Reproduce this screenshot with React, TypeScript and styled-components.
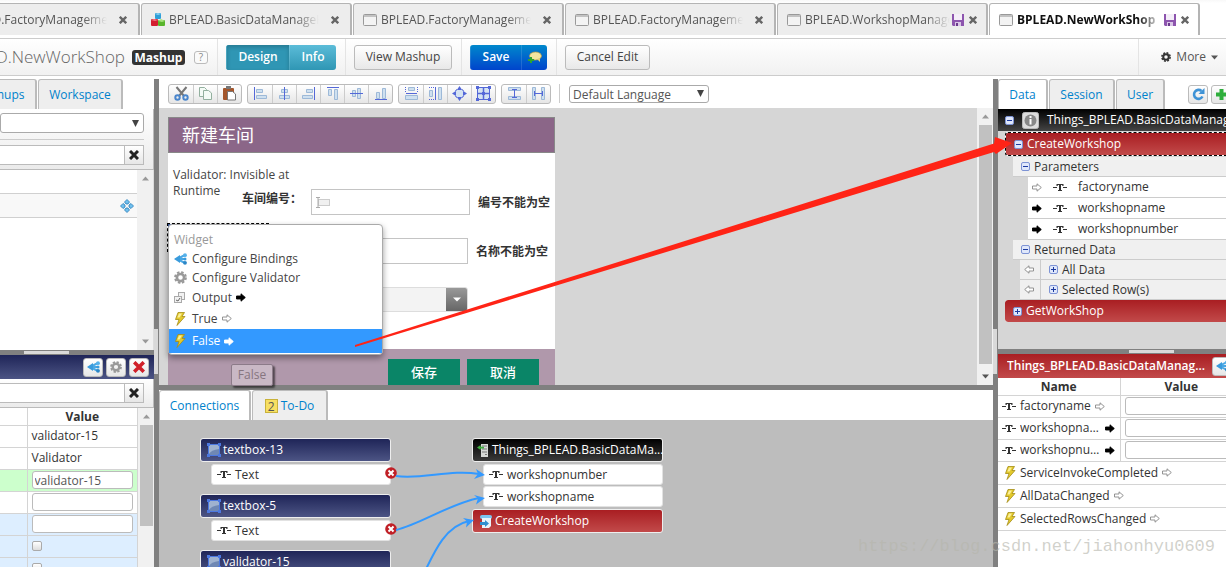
import React from 'react';
import styled, { createGlobalStyle, css } from 'styled-components';

const FONT = '"Open Sans", "Noto Sans", "Noto Sans CJK SC", sans-serif';

const Global = createGlobalStyle`
  *, *::before, *::after { box-sizing: border-box; }
  body { margin: 0; background: #fff; color: #333; font: 12px/16px ${FONT}; overflow: hidden; }
  button, input, select { font: inherit; color: inherit; margin: 0; }
  button { cursor: pointer; }
  h1, h2 { margin: 0; font: inherit; }
  svg { display: block; flex: none; }
`;

/* ---------- shell ---------- */

const Shell = styled.div`
  position: relative;
  display: flex;
  flex-direction: column;
  height: 100vh;
  overflow: hidden;
`;

const TabStrip = styled.nav`
  display: flex;
  gap: 1px;
  height: 35px;
  padding-top: 3px;
  margin-left: -71px;
  background: linear-gradient(#f8f8f8, #fff 3px);
`;

const DocTab = styled.div<{ $active?: boolean }>`
  display: flex;
  align-items: center;
  flex: none;
  width: 211px;
  height: 32px;
  padding: 0 8px 0 9px;
  border: 1px solid #b4b4b4;
  border-width: 1px 2px 0 1px;
  border-radius: 3px 3px 0 0;
  background: ${(p) => (p.$active ? '#fff' : '#ededed')};
`;

const DocName = styled.a<{ $active?: boolean }>`
  flex: 1;
  min-width: 0;
  margin-left: 4px;
  overflow: hidden;
  white-space: nowrap;
  text-decoration: none;
  color: ${(p) => (p.$active ? '#111' : '#555')};
  font-weight: ${(p) => (p.$active ? 700 : 400)};
  mask-image: linear-gradient(90deg, #000 calc(100% - 24px), transparent);
`;

const IconButton = styled.button`
  display: flex;
  align-items: center;
  justify-content: center;
  flex: none;
  padding: 0;
  border: 0;
  background: none;
`;

const DocActions = styled.div<{ $wide?: boolean }>`
  display: flex;
  align-items: center;
  justify-content: flex-end;
  gap: 5px;
  width: ${(p) => (p.$wide ? 27 : 20)}px;
  margin-right: ${(p) => (p.$wide ? 1 : 3)}px;
`;

const Header = styled.header`
  display: flex;
  align-items: center;
  flex: none;
  height: 38px;
  margin: 3px 0;
  border: 1px solid #ccc;
  border-width: 1px 0;
  background: linear-gradient(#fff, #f1f1f1);
`;

const Title = styled.h1`
  display: flex;
  justify-content: flex-end;
  width: 125px;
  overflow: hidden;
  font-size: 17px;
  line-height: 24px;
  font-weight: 300;
  color: #666;
  white-space: nowrap;
`;

const Badge = styled.span`
  width: 53px;
  height: 15px;
  margin-left: 7px;
  border-radius: 3px;
  background: #333;
  color: #fff;
  font-weight: 700;
  line-height: 15px;
  text-align: center;
`;

const Help = styled.button`
  width: 14px;
  height: 13px;
  margin: 0 9px;
  padding: 0;
  border: 1px solid #bbb;
  border-radius: 3px;
  background: #fafafa;
  color: #888;
  font-size: 10px;
  line-height: 10px;
`;

const HeaderGroup = styled.div`
  display: flex;
  align-items: center;
  height: 36px;
  padding: 0 9px 0 8px;
  border-left: 1px solid #e4e4e4;
`;

const PlainButton = styled.button<{ $w: number }>`
  width: ${(p) => p.$w}px;
  height: 25px;
  padding: 0;
  border: 1px solid #bbb;
  border-radius: 3px;
  background: linear-gradient(#fff, #e8e8e8);
  color: #444;
`;

const Split = styled.div<{ $tone: 'teal' | 'blue' }>`
  display: flex;
  height: 25px;
  overflow: hidden;
  border-radius: 3px;
  background: ${(p) =>
    p.$tone === 'teal' ? 'linear-gradient(#5bbcd8, #2f96b4)' : 'linear-gradient(#0088cc, #0044cc)'};
`;

const SplitPart = styled.button<{ $w: number; $pressed?: boolean }>`
  display: flex;
  align-items: center;
  justify-content: center;
  width: ${(p) => p.$w}px;
  padding: 0;
  border: 0;
  border-left: 1px solid #ffffff22;
  background: ${(p) => (p.$pressed ? '#2f96b4' : 'none')};
  box-shadow: ${(p) => (p.$pressed ? 'inset 0 2px 4px #0003' : 'none')};
  color: #fff;
  font-weight: 600;
`;

const More = styled.button`
  display: flex;
  align-items: center;
  gap: 5px;
  height: 36px;
  margin-left: auto;
  padding: 0 8px 0 22px;
  border: 0;
  border-left: 1px solid #e4e4e4;
  background: none;
  color: #555;
`;

const Body = styled.main`
  display: grid;
  grid-template-columns: 154px 5px minmax(0, 1fr) 5px 228px;
  flex: 1;
  min-height: 0;
`;

const Column = styled.section`
  display: flex;
  flex-direction: column;
  min-width: 0;
  min-height: 0;
  overflow: hidden;
`;

const VSplit = styled.div`
  display: flex;
  flex-direction: column;
  padding-top: 250px;
  background: #808080;
  &::before { content: ''; height: 45px; margin-right: 1px; background: #d9d9d9; }
`;

const HSplit = styled.div<{ $start?: number }>`
  flex: none;
  height: 5px;
  padding: 1px 0 0 ${(p) => p.$start ?? 0}px;
  background: #808080;
  &::before {
    content: '';
    display: ${(p) => (p.$start ? 'block' : 'none')};
    width: 45px;
    height: 3px;
    background: #d9d9d9;
  }
`;

/* ---------- shared parts ---------- */

const Tabs = styled.nav`
  display: flex;
  flex: none;
  gap: 1px;
  height: 30px;
  background: #fff;
`;

const Tab = styled.a<{ $active?: boolean; $w: number }>`
  display: flex;
  align-items: center;
  justify-content: center;
  gap: 3px;
  flex: none;
  width: ${(p) => p.$w}px;
  border: 1px solid #bbb;
  border-width: 1px 2px 0 1px;
  border-radius: 3px 3px 0 0;
  background: ${(p) => (p.$active ? '#fff' : '#eee')};
  color: #0082cc;
  text-decoration: none;
`;

const LeftTabs = styled(Tabs)`
  margin-left: -38px;
`;

const Controls = styled.div<{ $h: number }>`
  display: flex;
  flex-direction: column;
  justify-content: space-between;
  flex: none;
  height: ${(p) => p.$h}px;
  padding: 4px 9px 4px 0;
  border: 1px solid #bbb;
  border-width: 0 1px 1px 0;
  background: linear-gradient(#fff, #ebebeb);
`;

const Divider = styled.hr`
  width: 100%;
  margin: 0;
  border: 0;
  border-top: 1px solid #ccc;
`;

const Picker = styled.div<{ $w?: string }>`
  display: grid;
  align-items: center;
  width: ${(p) => p.$w ?? '100%'};
  & > * { grid-area: 1 / 1; }
  & > svg { justify-self: end; margin-right: 5px; pointer-events: none; }
`;

const Select = styled.select<{ $h: number }>`
  width: 100%;
  height: ${(p) => p.$h}px;
  padding: 1px 3px 0;
  border: 1px solid #aaa;
  border-radius: 3px;
  background: #fff;
  color: #555;
  appearance: none;
`;

const SearchRow = styled.div`
  display: flex;
  height: 20px;
`;

const SearchBox = styled.input`
  flex: 1;
  min-width: 0;
  border: 1px solid #bbb;
  border-width: 1px 0 1px 0;
  background: #fff;
`;

const ClearButton = styled(IconButton)`
  width: 20px;
  border: 1px solid #bbb;
  background: linear-gradient(#fff, #e6e6e6);
`;

const ToolChip = styled(IconButton)`
  width: 20px;
  height: 19px;
  border: 1px solid #bbb;
  border-radius: 3px;
  background: linear-gradient(#fff, #e6e6e6);
`;

const Bar = styled.div`
  display: flex;
  flex-direction: column;
  align-items: center;
  flex: none;
  width: 16px;
  background: #f1f1f1;
  & > svg { margin: 6px 0; }
`;

const Thumb = styled.div<{ $h?: number }>`
  width: 13px;
  flex: ${(p) => (p.$h ? `0 0 ${p.$h}px` : '1')};
  margin-bottom: ${(p) => (p.$h ? 'auto' : '4px')};
  background: #c1c1c1;
`;

const Spacer = styled.div`
  flex: 1;
`;

/* ---------- left column ---------- */

const ListPane = styled.div<{ $h: number }>`
  display: flex;
  flex: none;
  height: ${(p) => p.$h}px;
  border-right: 1px solid #ddd;
`;

const WidgetList = styled.div`
  flex: 1;
  padding-top: 23px;
`;

const WidgetRow = styled.div`
  display: flex;
  align-items: center;
  justify-content: flex-end;
  height: 25px;
  padding-right: 3px;
  border: 1px solid #d0d0d0;
  border-width: 1px 0;
  background: #f8f8f8;
`;

const PaneHead = styled.div<{ $tone: 'navy' | 'red' }>`
  display: flex;
  align-items: center;
  flex: none;
  gap: 3px;
  height: 24px;
  padding: 0 5px 0 9px;
  overflow: hidden;
  color: #fff;
  font-weight: 600;
  background: ${(p) =>
    p.$tone === 'navy' ? 'linear-gradient(#1f2558, #4c5484)' : 'linear-gradient(#a91e22, #c24a4a)'};
`;

const PropPane = styled.div`
  display: flex;
  flex: 1;
  min-height: 0;
  overflow: hidden;
`;

const Table = styled.table`
  flex: 1;
  width: 100%;
  height: max-content;
  border-collapse: collapse;
  table-layout: fixed;
  th { height: 17px; padding: 0; line-height: 15px; border: 1px solid #d4d4d4; border-width: 0 1px 1px 0; }
  td { height: 22px; padding: 0 4px; border: 1px solid #d4d4d4; border-width: 0 1px 1px 0; overflow: hidden; white-space: nowrap; }
`;

/* The service table runs on past the window's right edge. */
const WideTable = styled(Table)`
  flex: none;
  width: calc(100% + 17px);
`;

const PropRow = styled.tr<{ $tone?: string }>`
  background: ${(p) => p.$tone ?? '#fff'};
`;

const Field = styled.input`
  display: block;
  width: 101px;
  height: 18px;
  padding: 0 2px;
  border: 1px solid #bbb;
  border-radius: 3px;
  background: #fff;
  color: #555;
`;

const WideField = styled(Field)`
  width: 110px;
`;

const Check = styled.input`
  display: block;
  width: 10px;
  height: 10px;
  appearance: none;
  border: 1px solid #aaa;
  border-radius: 2px;
  background: linear-gradient(#fff, #ddd);
`;

/* ---------- centre ---------- */

const Toolbar = styled.div`
  display: flex;
  align-items: center;
  flex: none;
  gap: 5px;
  height: 29px;
  padding-left: 9px;
  background: #fff;
`;

const ToolGroup = styled.div`
  display: flex;
  height: 20px;
  border: 1px solid #bbb;
  border-radius: 3px;
  background: linear-gradient(#fff, #e6e6e6);
`;

const Tool = styled(IconButton)`
  width: 24px;
  & + & { border-left: 1px solid #ccc; }
`;

const ToolDivider = styled.div`
  width: 1px;
  height: 19px;
  margin: 0 4px 0 3px;
  background: #ccc;
`;

const Stage = styled.div`
  position: relative;
  display: flex;
  flex: none;
  height: 277px;
  background: #d6d6d6;
`;

const StageArea = styled.div`
  flex: 1;
  min-width: 0;
  padding: 9px 0 0 9px;
`;

const Mashup = styled.div`
  display: flex;
  flex-direction: column;
  width: 387px;
  height: 268px;
  background: #fff;
`;

const MashupTitle = styled.h2`
  height: 36px;
  padding-left: 13px;
  border: 1px solid #888;
  background: #8b6688;
  color: #fff;
  font-size: 18px;
  line-height: 34px;
`;

const FormArea = styled.div`
  display: flex;
  flex-direction: column;
  gap: 23px;
  flex: 1;
  padding-top: 14px;
`;

const FormRow = styled.div<{ $pad: number }>`
  display: flex;
  align-items: flex-end;
  padding-left: ${(p) => p.$pad}px;
`;

const ValidatorNote = styled.p`
  width: 126px;
  margin: 0 -57px 16px 0;
  color: #444;
`;

const FieldLabel = styled.label`
  width: 69px;
  margin-bottom: 8px;
  font-weight: 700;
`;

const FieldHint = styled.span`
  margin: 0 0 4px 8px;
  font-weight: 700;
`;

const MashBox = styled.div<{ $w: number }>`
  display: grid;
  align-items: center;
  width: ${(p) => p.$w}px;
  height: 26px;
  & > * { grid-area: 1 / 1; }
  & > input { width: 100%; height: 100%; border: 1px solid #c4c4c4; background: #fff; }
  & > svg { margin-left: 4px; pointer-events: none; }
`;

const Combo = styled.div`
  display: flex;
  width: 157px;
  height: 25px;
  border: 1px solid #ddd;
  border-radius: 3px;
  overflow: hidden;
  background: #f3f3f3;
`;

const ComboButton = styled(IconButton)`
  width: 21px;
  margin-left: auto;
  background: linear-gradient(#999, #666);
`;

const MashupFooter = styled.div`
  display: flex;
  justify-content: flex-end;
  gap: 7px;
  height: 36px;
  padding: 10px 16px 0 0;
  background: #b098ab;
`;

const GreenButton = styled.button`
  width: 72px;
  padding: 0;
  border: 0;
  background: #0a8567;
  color: #fff;
  font-size: 13px;
  font-weight: 500;
`;

const Selection = styled.div`
  position: absolute;
  left: 8px;
  top: 115px;
  width: 102px;
  height: 29px;
  border: 1px dashed #000;
  background: linear-gradient(#3b5a9a, #3b5a9a) padding-box, linear-gradient(#fff, #fff) border-box;
`;

const Menu = styled.ul`
  position: absolute;
  left: 9px;
  top: 116px;
  width: 215px;
  margin: 0;
  padding: 5px 0 1px;
  border: 1px solid #aaa;
  border-radius: 4px;
  background: #fff;
  box-shadow: 0 3px 6px #0006;
  list-style: none;
`;

const MenuItem = styled.li<{ $h: number; $kind?: 'title' | 'selected' }>`
  & > button, & > span {
    display: flex;
    align-items: center;
    gap: 4px;
    width: 100%;
    height: ${(p) => p.$h}px;
    padding: 0 5px;
    border: 0;
    background: ${(p) => (p.$kind === 'selected' ? '#3399ff' : 'none')};
    color: ${(p) => (p.$kind === 'selected' ? '#fff' : p.$kind === 'title' ? '#999' : '#444')};
  }
`;

const MenuIcon = styled.span`
  display: flex;
  flex: none;
  width: 14px;
`;

const Tooltip = styled.div`
  position: absolute;
  z-index: 2;
  left: 72px;
  top: 256px;
  width: 42px;
  height: 22px;
  border: 1px solid #8c7b89;
  border-radius: 2px;
  background: #c9b8c5;
  box-shadow: 2px 2px 2px #0008;
  color: #86757f;
  line-height: 20px;
  text-align: center;
`;

const Graph = styled.div`
  position: relative;
  flex: 1;
  min-height: 0;
  overflow: hidden;
  background: #bdbdbd;
`;

const Wires = styled.svg`
  position: absolute;
  z-index: 1;
  left: 0;
  top: 0;
  pointer-events: none;
`;

const Node = styled.div<{ $x: number; $y: number }>`
  position: absolute;
  left: ${(p) => p.$x}px;
  top: ${(p) => p.$y}px;
  display: flex;
  flex-direction: column;
  gap: 1px;
  width: 191px;
`;

const NODE_BG = {
  navy: 'linear-gradient(#1f2558, #4c5484)',
  black: 'linear-gradient(#000, #3a3a3a)',
  red: 'linear-gradient(#a91e22, #c24a4a)',
};

const NodeHead = styled.div<{ $tone: keyof typeof NODE_BG }>`
  display: flex;
  align-items: center;
  gap: 2px;
  height: 24px;
  margin: 1px 0;
  padding: 0 0 0 ${(p) => (p.$tone === 'black' ? 4 : 6)}px;
  border: 1px solid #eee;
  border-radius: 3px;
  background: ${(p) => NODE_BG[p.$tone]};
  color: #fff;
  white-space: nowrap;
`;

const NodePort = styled.div`
  display: flex;
  align-items: center;
  gap: 4px;
  height: 21px;
  margin-left: 11px;
  padding-left: 5px;
  border: 1px solid #e2e2e2;
  border-radius: 3px;
  background: #fff;
`;

const Remove = styled(IconButton)`
  margin: 0 -7px 4px auto;
`;

const TodoCount = styled.span`
  width: 13px;
  height: 14px;
  border: 1px solid #c9b23a;
  background: #f7df62;
  color: #555;
  line-height: 13px;
  text-align: center;
`;

/* ---------- right column ---------- */

const TabTools = styled.div`
  display: flex;
  gap: 3px;
  align-items: center;
  margin-left: 22px;
`;

const Tree = styled.div`
  display: flex;
  flex-direction: column;
  flex: none;
  height: 240px;
  background: #d6d6d6;
`;

const TreeRow = styled.div<{
  $indent: number;
  $kind: 'root' | 'service' | 'group' | 'leaf' | 'result';
  $dashed?: boolean;
}>`
  display: flex;
  align-items: center;
  flex: none;
  gap: 4px;
  height: ${(p) => (p.$kind === 'leaf' ? 21 : 20)}px;
  margin-left: ${(p) => p.$indent}px;
  padding-left: ${(p) => (p.$kind === 'leaf' || p.$kind === 'result' ? 4 : 8)}px;
  border-bottom: 1px solid #ccc;
  overflow: hidden;
  white-space: nowrap;
  background: ${(p) => (p.$kind === 'leaf' ? '#fff' : '#f0f0f0')};
  ${(p) =>
    p.$kind === 'root' &&
    css`
      gap: 8px;
      height: 22px;
      margin-bottom: 1px;
      padding-left: 7px;
      border: 0;
      background: linear-gradient(#000, #444);
      color: #fff;
    `}
  ${(p) =>
    p.$kind === 'service' &&
    css`
      height: ${p.$dashed ? 24 : 22}px;
      margin-bottom: ${p.$dashed ? 1 : 0}px;
      border: ${p.$dashed ? '1px dashed #000' : '0'};
      border-right: 0;
      border-radius: 3px 0 0 3px;
      background: linear-gradient(#a91e22, #c24a4a) padding-box, linear-gradient(#fff, #fff) border-box;
      color: #fff;
    `}
`;

const LeafCell = styled.span<{ $w: number; $line?: boolean }>`
  display: flex;
  align-items: center;
  flex: none;
  width: ${(p) => p.$w}px;
  height: 100%;
  border-right: ${(p) => (p.$line ? '1px solid #ccc' : '0')};
`;

const CellRow = styled.div`
  display: flex;
  align-items: center;
  gap: 4px;
`;

const Ellipsis = styled.span`
  width: 81px;
  overflow: hidden;
  text-overflow: ellipsis;
`;

const HeadText = styled.span`
  flex: none;
  width: 202px;
  overflow: hidden;
  text-overflow: ellipsis;
  white-space: nowrap;
`;

const EventRow = styled.div`
  display: flex;
  align-items: center;
  flex: none;
  gap: 4px;
  height: 23px;
  padding-left: 6px;
  border-bottom: 1px solid #d4d4d4;
`;

const Pointer = styled.svg`
  position: absolute;
  z-index: 3;
  right: 213px;
  top: 134px;
  pointer-events: none;
`;

const Watermark = styled.div`
  position: absolute;
  z-index: 3;
  right: 11px;
  bottom: 9px;
  color: #b6b6aca0;
  font: 17px/22px "Liberation Mono", monospace;
  pointer-events: none;
`;

/* ---------- icons ---------- */

const Cross = ({ size = 8, color = '#555' }: { size?: number; color?: string }) => (
  <svg width={size} height={size} viewBox="0 0 10 10">
    <path d="M1 1l8 8M9 1l-8 8" stroke={color} strokeWidth="3" />
  </svg>
);

const Floppy = () => (
  <svg width="12" height="12" viewBox="0 0 12 12">
    <path d="M0 0h12v12H1L0 11z" fill="#8d55ae" />
    <path d="M2 0h8v6H2z" fill="#f4eef8" />
    <path d="M3 8h6v4H3z" fill="#d9c6e6" />
    <path d="M4 9h2v3H4z" fill="#6b3a8c" />
  </svg>
);

const WindowIcon = () => (
  <svg width="14" height="12" viewBox="0 0 14 12">
    <rect x=".5" y=".5" width="13" height="11" rx="1" fill="#f3f3f3" stroke="#999" />
    <path d="M1 1h12v2H1z" fill="#c2c2c2" />
  </svg>
);

const Blocks = () => (
  <svg width="14" height="14" viewBox="0 0 14 14">
    <rect x="4" y="0" width="6" height="6" rx="1" fill="#2f9fd8" />
    <path d="M4 1l3-1 3 1-3 1z" fill="#8ed2f2" />
    <rect x="0" y="6" width="7" height="7" rx="1" fill="#d31f30" />
    <path d="M0 7l3-1 4 1-3 1z" fill="#f07a84" />
    <rect x="7" y="7" width="7" height="6" rx="1" fill="#59b52c" />
    <path d="M7 8l3-2 4 2-3 1z" fill="#a6e07c" />
  </svg>
);

const Gear = ({ size = 12, color = '#999' }: { size?: number; color?: string }) => (
  <svg width={size} height={size} viewBox="0 0 12 12" fill="none">
    <circle cx="6" cy="6" r="5" stroke={color} strokeWidth="1.8" strokeDasharray="2.3 1.63" />
    <circle cx="6" cy="6" r="3.3" stroke={color} strokeWidth="2.4" />
  </svg>
);

const Caret = ({ w = 7, color = '#444', up = false }: { w?: number; color?: string; up?: boolean }) => (
  <svg width={w} height="5" viewBox="0 0 7 5" preserveAspectRatio="none">
    <path d={up ? 'M0 4.5h7L3.5.5z' : 'M0 .5h7L3.5 4.5z'} fill={color} />
  </svg>
);

const BigCaret = () => (
  <svg width="7" height="7" viewBox="0 0 7 7">
    <path d="M0 0h7L3.5 7z" fill="#444" />
  </svg>
);

const Chat = () => (
  <svg width="14" height="12" viewBox="0 0 14 12">
    <ellipse cx="7.5" cy="5" rx="6" ry="4" fill="#f3e6a0" stroke="#b99c40" strokeWidth=".7" />
    <path d="M9 8l3 3v-4z" fill="#e2cf77" />
    <path d="M3 6v6M0 9h6" stroke="#2ea52e" strokeWidth="2" />
  </svg>
);

const Move = () => (
  <svg width="14" height="14" viewBox="0 0 14 14" fill="#6fc0ee" stroke="#2b7cb8" strokeWidth=".8">
    <path d="M7 .5l2.500 2.500-1.500 2H6L4.500 3zM7 13.500l2.500-2.500-1.500-2H6l-1.500 2zM.5 7L3 9.500l2-1.500V6L3 4.500zM13.500 7L11 9.500 9 8V6l2-1.500z" />
  </svg>
);

const Bindings = () => (
  <svg width="13" height="12" viewBox="0 0 13 12">
    <path d="M11 2L3 6l8 4M3 6h8" stroke="#49a7e4" strokeWidth="2" fill="none" />
    <path d="M0 6l6-4v8z" fill="#3a9bdc" />
    <circle cx="11" cy="2.200" r="1.900" fill="#55b1ea" />
    <circle cx="11" cy="9.800" r="1.900" fill="#2b86c6" />
    <circle cx="11" cy="6" r="1.500" fill="#3a9bdc" />
  </svg>
);

const Arrow = ({ solid, left, color = '#000' }: { solid?: boolean; left?: boolean; color?: string }) => (
  <svg width="10" height="9" viewBox="0 0 10 9">
    <path
      d="M.5 3h4.500V.8L9.300 4.500 5 8.200V6H.5z"
      transform={left ? 'matrix(-1 0 0 1 10 0)' : undefined}
      fill={solid ? color : '#fff'}
      stroke={solid ? color : '#888'}
      strokeWidth=".9"
    />
  </svg>
);

const StringType = () => (
  <svg width="14" height="9" viewBox="0 0 14 9">
    <path d="M0 4.500h4M10 4.500h4" stroke="#333" />
    <path d="M3.500 1h7v2h-1L9 2H8v5h1v1H5V7h1V2H5l-.5 1h-1z" fill="#333" />
  </svg>
);

const Bolt = () => (
  <svg width="12" height="14" viewBox="0 0 12 14">
    <path d="M4 .5h6.500L8 4.500h3L3 13.500l2-6H1.500z" fill="#e3c92c" stroke="#a58d16" strokeWidth=".8" />
    <path d="M5 1.500h3L5.500 5.500H3.300z" fill="#fbf09a" />
  </svg>
);

const Toggle = ({ open }: { open?: boolean }) => (
  <svg width="9" height="9" viewBox="0 0 9 9">
    <rect x=".5" y=".5" width="8" height="8" rx="1.500" fill="#dfe7fb" stroke="#7d93d4" />
    <path d={open ? 'M2 4.500h5' : 'M2 4.500h5M4.500 2v5'} stroke="#1c3aa0" />
  </svg>
);

const Info = () => (
  <svg width="17" height="17" viewBox="0 0 17 17">
    <rect x=".5" y=".5" width="16" height="16" rx="2" fill="#ddd" stroke="#bbb" />
    <circle cx="8.500" cy="8.500" r="6" fill="#888" />
    <path d="M8.500 4v2M8.500 7v5.500" stroke="#fff" strokeWidth="2" />
  </svg>
);

const Refresh = () => (
  <svg width="13" height="13" viewBox="0 0 13 13">
    <path d="M10.500 8.500A4.500 4.500 0 1 1 9.500 3" fill="none" stroke="#3f93d6" strokeWidth="2.600" />
    <path d="M12.500 0v6H6.500z" fill="#3f93d6" />
  </svg>
);

const Plus = () => (
  <svg width="13" height="13" viewBox="0 0 13 13">
    <path d="M6.500 1v11M1 6.500h11" stroke="#2fae3c" strokeWidth="4" />
  </svg>
);

const OutputIcon = () => (
  <svg width="12" height="12" viewBox="0 0 12 12" fill="#f2f2f2" stroke="#aaa">
    <rect x="4.500" y=".5" width="6" height="7" />
    <rect x=".5" y="4.500" width="7" height="6" />
    <path d="M2 8l2 1 2-3" fill="none" stroke="#666" />
  </svg>
);

const WidgetIcon = () => (
  <svg width="14" height="14" viewBox="0 0 14 14">
    <rect x="1.500" y="1.500" width="11" height="11" fill="#9fb2cf" stroke="#4c78e0" />
    <path d="M2 11Q4 7 12 6v6H2z" fill="#6f88b4" />
    <path d="M0 0h3v3H0zM11 0h3v3h-3zM0 11h3v3H0zM11 11h3v3h-3z" fill="#4c78e0" />
  </svg>
);

const ThingIcon = () => (
  <svg width="13" height="13" viewBox="0 0 13 13">
    <rect x="4" width="7" height="13" fill="#d6d9d6" />
    <path d="M5 2h5M5 5h5M5 8h5M8 10.500h2" stroke="#777" />
    <path d="M0 3.500l3.500-2.500v1.700H7v1.700H3.500V6z" fill="#3fae3f" />
  </svg>
);

const ServiceIcon = () => (
  <svg width="14" height="13" viewBox="0 0 14 13">
    <rect x="1" y="0" width="12" height="4" rx="2" fill="#7cc4ef" />
    <path d="M3 3h9v8l-2 2H3z" fill="#e8f3fa" />
    <path d="M1 7h5V5l4 3.500L6 12v-2H1z" fill="#2f8fd0" />
  </svg>
);

const RemoveIcon = () => (
  <svg width="12" height="12" viewBox="0 0 12 12">
    <circle cx="6" cy="6" r="5.800" fill="#c01f26" />
    <path d="M3.500 3.500l5 5M8.500 3.500l-5 5" stroke="#fff" strokeWidth="2" />
  </svg>
);

const TextboxIcon = () => (
  <svg width="15" height="11" viewBox="0 0 15 11">
    <rect x="3.500" y="2.500" width="11" height="6" fill="#f0f0f0" stroke="#ccc" />
    <path d="M1 .5h4M1 10.500h4M3 .5v10" stroke="#aaa" fill="none" />
  </svg>
);

const INK = '#5468d8';
const BLOCK = { fill: '#cfe0ef', stroke: '#9db9d8' };

const TOOL_ART: Record<string, React.ReactNode> = {
  Cut: (
    <g fill="none">
      <path d="M2.500 1l7.500 9M12.500 1L5 10" stroke="#777" strokeWidth="2" />
      <circle cx="3.500" cy="11.500" r="2.200" stroke="#4a86cc" strokeWidth="2" />
      <circle cx="11.500" cy="11.500" r="2.200" stroke="#4a86cc" strokeWidth="2" />
    </g>
  ),
  Copy: (
    <g fill="#f4fbf6" stroke="#93b09f">
      <path d="M1.500 1.500h5l2 2v7h-7z" />
      <path d="M5.500 4.500h5l3 2.500v6.500h-8z" />
    </g>
  ),
  Paste: (
    <g>
      <rect x="1" y="2" width="11" height="12" rx="1" fill="#a3562c" />
      <rect x="4" y="0" width="5" height="3" fill="#777" />
      <path d="M5.500 5.500h5l3 2.500v6h-8z" fill="#fff" stroke="#777" />
    </g>
  ),
  'Align left': (
    <g>
      <path d="M1.500 1v13" stroke={INK} />
      <path d="M3.500 3.500h6v3h-6zM3.500 9.500h10v3h-10z" {...BLOCK} />
    </g>
  ),
  'Align centre': (
    <g>
      <path d="M4.500 3.500h6v3h-6zM2.500 9.500h10v3h-10z" {...BLOCK} />
      <path d="M7.500 1v13" stroke={INK} />
    </g>
  ),
  'Align right': (
    <g>
      <path d="M5.500 3.500h6v3h-6zM1.500 9.500h10v3h-10z" {...BLOCK} />
      <path d="M13.500 1v13" stroke={INK} />
    </g>
  ),
  'Align top': (
    <g>
      <path d="M3.500 3.500h3v6h-3zM9.500 3.500h3v10h-3z" {...BLOCK} />
      <path d="M2 1.500h12" stroke={INK} />
    </g>
  ),
  'Align middle': (
    <g>
      <path d="M3.500 4.500h3v6h-3zM8.500 2.500h3v10h-3z" {...BLOCK} />
      <path d="M1 7.500h13" stroke={INK} />
    </g>
  ),
  'Align bottom': (
    <g>
      <path d="M3.500 6.500h3v6h-3zM9.500 2.500h3v10h-3z" {...BLOCK} />
      <path d="M2 13.500h12" stroke={INK} />
    </g>
  ),
  'Same width': (
    <g>
      <path d="M4.500 1.500h6v3h-6zM1.500 9.500h12v4h-12z" {...BLOCK} />
      <path d="M1.500 1v6M13.500 1v6" stroke={INK} strokeDasharray="1 1" />
      <path d="M2 7.500h11" stroke={INK} />
    </g>
  ),
  'Same height': (
    <g>
      <path d="M1.500 4.500h3v6h-3zM10.500 1.500h3v12h-3z" {...BLOCK} />
      <path d="M1 1.500h8M1 13.500h8" stroke={INK} strokeDasharray="1 1" />
      <path d="M7.500 2v11" stroke={INK} />
    </g>
  ),
  'Centre in parent': (
    <g>
      <rect x="3.500" y="3.500" width="8" height="8" rx="2" fill="#d5e3f2" stroke={INK} />
      <path d="M7.500 0l2 3h-4zM7.500 15l2-3h-4zM0 7.500l3 2v-4zM15 7.500l-3 2v-4z" fill={INK} />
    </g>
  ),
  'Fill parent': (
    <g>
      <rect x="1.500" y="1.500" width="12" height="12" fill="#d5e3f2" stroke={INK} />
      <path d="M7.500 1v13M1 7.500h13" stroke={INK} strokeWidth="1.500" />
      <path d="M0 0h3v3H0zM12 0h3v3h-3zM0 12h3v3H0zM12 12h3v3h-3zM6 6h3v3H6z" fill={INK} />
    </g>
  ),
  'Space vertically': (
    <g>
      <path d="M1.500 1.500h12v3h-12zM1.500 10.500h12v3h-12z" {...BLOCK} />
      <path d="M7.500 3v9M5 3.500h5M5 11.500h5" stroke={INK} />
    </g>
  ),
  'Space horizontally': (
    <g>
      <path d="M1.500 1.500h3v12h-3zM10.500 1.500h3v12h-3z" {...BLOCK} />
      <path d="M3 7.500h9M3.500 5v5M11.500 5v5" stroke={INK} />
    </g>
  ),
};

const ToolIcon = ({ name }: { name: string }) => (
  <svg width="15" height="15" viewBox="0 0 15 15">
    {TOOL_ART[name]}
  </svg>
);

/* ---------- data ---------- */

const DOCS = [
  { name: 'BPLEAD.FactoryManagement' },
  { name: 'BPLEAD.BasicDataManageHelper', blocks: true },
  { name: 'BPLEAD.FactoryManagement' },
  { name: 'BPLEAD.FactoryManagement' },
  { name: 'BPLEAD.WorkshopManagement', dirty: true },
  { name: 'BPLEAD.NewWorkShop', dirty: true, active: true },
];

const TOOLS = [
  ['Cut', 'Copy', 'Paste'],
  ['Align left', 'Align centre', 'Align right', 'Align top', 'Align middle', 'Align bottom'],
  ['Same width', 'Same height', 'Centre in parent', 'Fill parent'],
  ['Space vertically', 'Space horizontally'],
];

const PARAMS = [
  { name: 'factoryname', bound: false },
  { name: 'workshopname', bound: true },
  { name: 'workshopnumber', bound: true },
];

const EVENTS = ['ServiceInvokeCompleted', 'AllDataChanged', 'SelectedRowsChanged'];

const SOURCES = [
  { id: 'textbox-13', y: 17 },
  { id: 'textbox-5', y: 73 },
  { id: 'validator-15', y: 129 },
];

/* ---------- page ---------- */

const LeftColumn = () => (
  <Column>
    <LeftTabs>
      <Tab href="#mashups" $w={75}>Mashups</Tab>
      <Tab href="#workspace" $w={85}>Workspace</Tab>
    </LeftTabs>
    <Controls $h={61}>
      <Picker>
        <Select $h={20} aria-label="Category" />
        <BigCaret />
      </Picker>
      <Divider />
      <SearchRow>
        <SearchBox aria-label="Filter widgets" />
        <ClearButton aria-label="Clear filter"><Cross size={10} color="#222" /></ClearButton>
      </SearchRow>
    </Controls>
    <ListPane $h={180}>
      <WidgetList>
        <WidgetRow><Move /></WidgetRow>
      </WidgetList>
      <Bar><Caret up color="#999" /><Spacer /><Caret color="#999" /></Bar>
    </ListPane>
    <HSplit $start={24} />
    <PaneHead $tone="navy">
      <Spacer />
      <ToolChip aria-label="Configure bindings"><Bindings /></ToolChip>
      <ToolChip aria-label="Configure"><Gear /></ToolChip>
      <ToolChip aria-label="Delete"><Cross size={12} color="#d0202a" /></ToolChip>
    </PaneHead>
    <Controls $h={29}>
      <SearchRow>
        <SearchBox aria-label="Filter properties" />
        <ClearButton aria-label="Clear filter"><Cross size={10} color="#222" /></ClearButton>
      </SearchRow>
    </Controls>
    <PropPane>
      <Table>
        <colgroup><col style={{ width: 27 }} /><col /></colgroup>
        <thead><tr><th /><th>Value</th></tr></thead>
        <tbody>
          <PropRow><td /><td>validator-15</td></PropRow>
          <PropRow><td /><td>Validator</td></PropRow>
          <PropRow $tone="#ccffcc"><td /><td><Field aria-label="Display name" defaultValue="validator-15" /></td></PropRow>
          <PropRow><td /><td><Field aria-label="Description" /></td></PropRow>
          <PropRow $tone="#ddeeff"><td /><td><Field aria-label="Expression" /></td></PropRow>
          <PropRow $tone="#ddeeff"><td /><td><Check type="checkbox" aria-label="Auto evaluate" /></td></PropRow>
          <PropRow $tone="#ddeeff"><td /><td><Check type="checkbox" aria-label="Visible" /></td></PropRow>
        </tbody>
      </Table>
      <Bar><Caret up color="#999" /><Thumb $h={101} /></Bar>
    </PropPane>
  </Column>
);

const ContextMenu = () => (
  <Menu>
    <MenuItem $h={19} $kind="title"><span>Widget</span></MenuItem>
    <MenuItem $h={19}><button><MenuIcon><Bindings /></MenuIcon>Configure Bindings</button></MenuItem>
    <MenuItem $h={19}><button><MenuIcon><Gear size={13} /></MenuIcon>Configure Validator</button></MenuItem>
    <MenuItem $h={21}><button><MenuIcon><OutputIcon /></MenuIcon>Output<Arrow solid /></button></MenuItem>
    <MenuItem $h={21}><button><MenuIcon><Bolt /></MenuIcon>True<Arrow /></button></MenuItem>
    <MenuItem $h={24} $kind="selected">
      <button><MenuIcon><Bolt /></MenuIcon>False<Arrow solid color="#fff" /></button>
    </MenuItem>
  </Menu>
);

const CentreColumn = () => (
  <Column>
    <Toolbar>
      {TOOLS.map((group) => (
        <ToolGroup key={group[0]}>
          {group.map((t) => (
            <Tool key={t} aria-label={t}><ToolIcon name={t} /></Tool>
          ))}
        </ToolGroup>
      ))}
      <ToolDivider />
      <Picker $w="140px">
        <Select $h={18} aria-label="Language"><option>Default Language</option></Select>
        <BigCaret />
      </Picker>
    </Toolbar>
    <Stage>
      <StageArea>
        <Mashup>
          <MashupTitle>新建车间</MashupTitle>
          <FormArea>
            <FormRow $pad={5}>
              <ValidatorNote>Validator: Invisible at Runtime</ValidatorNote>
              <FieldLabel htmlFor="shop-no">车间编号：</FieldLabel>
              <MashBox $w={159}><input id="shop-no" /><TextboxIcon /></MashBox>
              <FieldHint>编号不能为空</FieldHint>
            </FormRow>
            <FormRow $pad={143}>
              <MashBox $w={157}><input aria-label="车间名称" /></MashBox>
              <FieldHint>名称不能为空</FieldHint>
            </FormRow>
            <FormRow $pad={143}>
              <Combo><ComboButton aria-label="Open list"><Caret w={8} color="#fff" /></ComboButton></Combo>
            </FormRow>
          </FormArea>
          <MashupFooter>
            <GreenButton>保存</GreenButton>
            <GreenButton>取消</GreenButton>
          </MashupFooter>
        </Mashup>
      </StageArea>
      <Bar><Caret up color="#999" /><Thumb /><Caret color="#555" /></Bar>
      <Selection />
      <ContextMenu />
      <Tooltip>False</Tooltip>
    </Stage>
    <HSplit />
    <Tabs>
      <Tab href="#connections" $active $w={92}>Connections</Tab>
      <Tab href="#todo" $w={76}><TodoCount>2</TodoCount>To-Do</Tab>
    </Tabs>
    <Graph>
      <Wires width="400" height="148" fill="none" stroke="#3399ff" strokeWidth="2">
        <path d="M237 56C262 60 292 49 320 54" />
        <path d="M237 110C262 104 290 84 320 78" />
        <path d="M246 188C268 158 276 108 310 101" />
        <g fill="#3399ff" stroke="none">
          <path d="M326 55l-9-6 2 5-4 5z" />
          <path d="M326 78l-11-3 4 3.500-2 6z" />
          <path d="M315 100l-11-2 4 3.500-1 6z" />
        </g>
      </Wires>
      {SOURCES.map((n) => (
        <Node key={n.id} $x={41} $y={n.y}>
          <NodeHead $tone="navy"><WidgetIcon />{n.id}</NodeHead>
          <NodePort><StringType />Text<Remove aria-label="Remove"><RemoveIcon /></Remove></NodePort>
        </Node>
      ))}
      <Node $x={313} $y={17}>
        <NodeHead $tone="black"><ThingIcon />Things_BPLEAD.BasicDataMa...</NodeHead>
        <NodePort><StringType />workshopnumber</NodePort>
        <NodePort><StringType />workshopname</NodePort>
        <NodeHead $tone="red"><ServiceIcon />CreateWorkshop</NodeHead>
      </Node>
    </Graph>
  </Column>
);

const RightColumn = () => (
  <Column>
    <Tabs>
      <Tab href="#data" $active $w={50}>Data</Tab>
      <Tab href="#session" $w={66}>Session</Tab>
      <Tab href="#user" $w={49}>User</Tab>
      <TabTools>
        <ToolChip aria-label="Refresh"><Refresh /></ToolChip>
        <ToolChip aria-label="Add"><Plus /></ToolChip>
      </TabTools>
    </Tabs>
    <Tree>
      <TreeRow $indent={0} $kind="root"><Toggle open /><Info />Things_BPLEAD.BasicDataManageHelper</TreeRow>
      <TreeRow $indent={7} $kind="service" $dashed><Toggle open />CreateWorkshop</TreeRow>
      <TreeRow $indent={15} $kind="group"><Toggle open />Parameters</TreeRow>
      {PARAMS.map((p) => (
        <TreeRow key={p.name} $indent={30} $kind="leaf">
          <LeafCell $w={17}><Arrow solid={p.bound} /></LeafCell>
          <LeafCell $w={21}><StringType /></LeafCell>
          {p.name}
        </TreeRow>
      ))}
      <TreeRow $indent={15} $kind="group"><Toggle open />Returned Data</TreeRow>
      {['All Data', 'Selected Row(s)'].map((t) => (
        <TreeRow key={t} $indent={22} $kind="result">
          <LeafCell $w={17} $line><Arrow left /></LeafCell>
          <LeafCell $w={13}><Spacer /><Toggle /></LeafCell>
          {t}
        </TreeRow>
      ))}
      <TreeRow $indent={7} $kind="service"><Toggle />GetWorkShop</TreeRow>
    </Tree>
    <HSplit $start={131} />
    <PaneHead $tone="red">
      <HeadText>Things_BPLEAD.BasicDataManageHelper</HeadText>
      <ToolChip aria-label="Configure bindings"><Bindings /></ToolChip>
    </PaneHead>
    <WideTable>
      <colgroup><col style={{ width: 122 }} /><col /></colgroup>
      <thead><tr><th>Name</th><th>Value</th></tr></thead>
      <tbody>
        {PARAMS.map((p) => (
          <tr key={p.name}>
            <td>
              <CellRow>
                <StringType />
                {p.bound ? <Ellipsis>{p.name}</Ellipsis> : p.name}
                <Arrow solid={p.bound} />
              </CellRow>
            </td>
            <td><WideField aria-label={p.name} /></td>
          </tr>
        ))}
      </tbody>
    </WideTable>
    {EVENTS.map((e) => (
      <EventRow key={e}><Bolt />{e}<Arrow /></EventRow>
    ))}
  </Column>
);

export default function App() {
  return (
    <>
      <Global />
      <Shell>
        <TabStrip>
          {DOCS.map((d, i) => (
            <DocTab key={i} $active={d.active}>
              {d.blocks ? <Blocks /> : <WindowIcon />}
              <DocName href="#doc" $active={d.active}>{d.name}</DocName>
              <DocActions $wide={d.dirty}>
                {d.dirty && <Floppy />}
                <IconButton aria-label="Close tab"><Cross color="#666" /></IconButton>
              </DocActions>
            </DocTab>
          ))}
        </TabStrip>
        <Header>
          <Title><span>BPLEAD.NewWorkShop</span></Title>
          <Badge>Mashup</Badge>
          <Help aria-label="Help">?</Help>
          <HeaderGroup>
            <Split $tone="teal">
              <SplitPart $w={63} $pressed>Design</SplitPart>
              <SplitPart $w={47}>Info</SplitPart>
            </Split>
          </HeaderGroup>
          <HeaderGroup><PlainButton $w={98}>View Mashup</PlainButton></HeaderGroup>
          <HeaderGroup>
            <Split $tone="blue">
              <SplitPart $w={51}>Save</SplitPart>
              <SplitPart $w={26} aria-label="Save with comment"><Chat /></SplitPart>
            </Split>
          </HeaderGroup>
          <HeaderGroup><PlainButton $w={85}>Cancel Edit</PlainButton></HeaderGroup>
          <More><Gear size={10} color="#333" />More<Caret color="#555" /></More>
        </Header>
        <Body>
          <LeftColumn />
          <VSplit />
          <CentreColumn />
          <VSplit />
          <RightColumn />
        </Body>
        <Pointer width="660" height="216" viewBox="0 0 660 216">
          <path d="M2 211L641 9.500 642 3 659 9 643 20 641 18 2 213z" fill="#ff2416" />
        </Pointer>
        <Watermark>https://blog.csdn.net/jiahonhyu0609</Watermark>
      </Shell>
    </>
  );
}
